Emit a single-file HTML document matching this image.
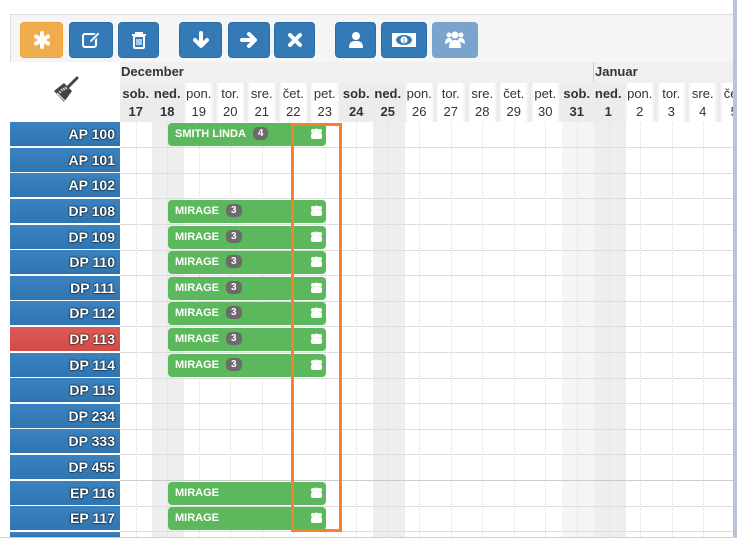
<!DOCTYPE html>
<html><head><meta charset="utf-8"><style>
*{margin:0;padding:0;box-sizing:border-box}
html,body{width:737px;height:541px;overflow:hidden}
body{background:#fff;font-family:"Liberation Sans",sans-serif;position:relative}
.a{position:absolute}
.tb{left:10px;top:14px;width:727px;height:48px;background:#f5f5f5;border-top:1px solid #ddd;border-left:1px solid #ddd}
.btn{position:absolute;top:22px;height:36px;border-radius:4px;background:#337ab7;border:1px solid #2e6da4;display:flex;align-items:center;justify-content:center}
.hd{left:10px;top:62px;width:724px;height:60px;background:#f0f0f0}
.day{position:absolute;top:83px;width:31.5px;height:39px;text-align:center;font-size:13px;color:#333;line-height:18px;padding-top:2px;background:linear-gradient(to right,#e8e8e8,#fff 4px,#fff 27px,#e8e8e8)}
.day.w{background:#ececec;font-weight:bold}
.day b{display:block}
.day span{display:block}
.lbl{position:absolute;left:10px;width:110px;height:24px;background:linear-gradient(#3a82c0,#3075b0);color:#fff;font-weight:bold;font-size:14px;text-align:right;padding-right:5px;line-height:24px;text-shadow:0 0 2px #000,0 0 1px #000;overflow:hidden}
.lbl.r{background:linear-gradient(#dc5b57,#d24c48)}
.hl{position:absolute;left:120px;width:614px;height:1px;background:#ddd}
.vl{position:absolute;top:122px;width:0;height:415px;border-left:1px dotted #ddd}
.gc{position:absolute;top:122px;width:31.5px;height:415px;background:#eee}
.bar{position:absolute;left:168px;width:158px;height:23px;background:#5cb85c;border-radius:4px;color:#fff;font-weight:bold;font-size:11px;line-height:23px;padding-left:7px}
.bg{display:inline-block;background:#6b6b6b;border-radius:5px;font-size:10px;line-height:13px;padding:0 5px;margin-left:7px;vertical-align:1px}
.ic{position:absolute;right:3px;top:5px}
</style></head><body>
<div class="a tb"></div>
<div class="btn" style="left:20px;width:43px;background:#f0ad4e;border-color:#eea236"><svg width="18" height="18" viewBox="0 0 18 18"><g stroke="#fff" stroke-width="4" stroke-linecap="round"><line x1="9" y1="2" x2="9" y2="16"/><line x1="3" y1="5.5" x2="15" y2="12.5"/><line x1="3" y1="12.5" x2="15" y2="5.5"/></g></svg></div>
<div class="btn" style="left:69px;width:44px"><svg width="20" height="18" viewBox="0 0 20 18"><rect x="2" y="3" width="13" height="13" rx="2" fill="none" stroke="#fff" stroke-width="2"/><path d="M8 12l1-3 8-8 2 2-8 8z" fill="#fff" stroke="#337ab7" stroke-width="1"/></svg></div>
<div class="btn" style="left:118px;width:41px"><svg width="16" height="18" viewBox="0 0 16 18"><path d="M1 4h14M5 4V2h6v2" stroke="#fff" stroke-width="2" fill="none"/><rect x="3" y="5" width="10" height="12" rx="1" fill="none" stroke="#fff" stroke-width="2"/><path d="M6 8v6M8 8v6M10 8v6" stroke="#fff" stroke-width="1.2"/></svg></div>
<div class="btn" style="left:179px;width:43px"><svg width="18" height="18" viewBox="0 0 18 18"><path d="M9 2v12M3 9l6 6 6-6" stroke="#fff" stroke-width="4" fill="none" stroke-linecap="round" stroke-linejoin="round"/></svg></div>
<div class="btn" style="left:228px;width:42px"><svg width="18" height="18" viewBox="0 0 18 18"><path d="M2 9h12M9 3l6 6-6 6" stroke="#fff" stroke-width="4" fill="none" stroke-linecap="round" stroke-linejoin="round"/></svg></div>
<div class="btn" style="left:274px;width:41px"><svg width="14" height="14" viewBox="0 0 14 14"><path d="M2 2l10 10M12 2L2 12" stroke="#fff" stroke-width="4" stroke-linecap="round"/></svg></div>
<div class="btn" style="left:335px;width:41px"><svg width="18" height="18" viewBox="0 0 18 18"><circle cx="9" cy="5" r="4" fill="#fff"/><path d="M2 17c0-6 3-7 7-7s7 1 7 7z" fill="#fff"/></svg></div>
<div class="btn" style="left:381px;width:46px"><svg width="24" height="14" viewBox="0 0 24 14"><rect x="0" y="0" width="24" height="14" fill="#fff"/><ellipse cx="12" cy="7" rx="8" ry="5" fill="#337ab7"/><circle cx="12" cy="7" r="3.5" fill="#fff"/><text x="12" y="9.5" font-size="6" text-anchor="middle" fill="#337ab7" font-family="Liberation Sans">1</text></svg></div>
<div class="btn" style="left:432px;width:46px;background:#7aa4cd;border-color:#7aa4cd"><svg width="22" height="18" viewBox="0 0 22 18"><circle cx="5" cy="4" r="2.5" fill="#fff"/><circle cx="17" cy="4" r="2.5" fill="#fff"/><circle cx="11" cy="4" r="3.5" fill="#fff"/><path d="M1 13c0-5 2-6 4-6s3 1 3 3zM21 13c0-5-2-6-4-6s-3 1-3 3z" fill="#fff"/><path d="M5 17c0-7 3-8 6-8s6 1 6 8z" fill="#fff"/></svg></div>

<div class="a hd"></div>
<div class="a" style="left:10px;top:62px;width:110px;height:60px;background:#fff"></div>
<svg class="a" style="left:48px;top:74px" width="36" height="32" viewBox="0 0 36 32"><path d="M20 13l9-9" stroke="#444" stroke-width="3" stroke-linecap="round"/><path d="M6 17l10-8 8 8-8 11z" fill="#444"/><path d="M9 19l8 8M11 17l2 2M13 15l2 2M15 14l2 2M17 13l2 2" stroke="#cfe0f0" stroke-width="1.3"/></svg>
<div class="a" style="left:121px;top:64px;font-size:13px;font-weight:bold;color:#333">December</div>
<div class="a" style="left:593px;top:62px;width:1px;height:20px;background:#ccc"></div>
<div class="a" style="left:595px;top:64px;font-size:13px;font-weight:bold;color:#333">Januar</div>

<div class="day w" style="left:120px"><b>sob.</b><b>17</b></div>
<div class="day w" style="left:151.5px"><b>ned.</b><b>18</b></div>
<div class="day" style="left:183px"><span>pon.</span><span>19</span></div>
<div class="day" style="left:214.5px"><span>tor.</span><span>20</span></div>
<div class="day" style="left:246px"><span>sre.</span><span>21</span></div>
<div class="day" style="left:277.5px"><span>čet.</span><span>22</span></div>
<div class="day" style="left:309px"><span>pet.</span><span>23</span></div>
<div class="day w" style="left:340.5px"><b>sob.</b><b>24</b></div>
<div class="day w" style="left:372px"><b>ned.</b><b>25</b></div>
<div class="day" style="left:403.5px"><span>pon.</span><span>26</span></div>
<div class="day" style="left:435px"><span>tor.</span><span>27</span></div>
<div class="day" style="left:466.5px"><span>sre.</span><span>28</span></div>
<div class="day" style="left:498px"><span>čet.</span><span>29</span></div>
<div class="day" style="left:529.5px"><span>pet.</span><span>30</span></div>
<div class="day w" style="left:561px"><b>sob.</b><b>31</b></div>
<div class="day w" style="left:592.5px"><b>ned.</b><b>1</b></div>
<div class="day" style="left:624px"><span>pon.</span><span>2</span></div>
<div class="day" style="left:655.5px"><span>tor.</span><span>3</span></div>
<div class="day" style="left:687px"><span>sre.</span><span>4</span></div>
<div class="day" style="left:718.5px"><span>čet.</span><span>5</span></div>

<div class="gc" style="left:152px"></div>
<div class="gc" style="left:373px"></div>
<div class="gc" style="left:562px;background:#f5f5f5"></div>
<div class="gc" style="left:594px"></div>

<div class="vl" style="left:136px"></div><div class="vl" style="left:167px"></div><div class="vl" style="left:199px"></div><div class="vl" style="left:230px"></div><div class="vl" style="left:262px"></div><div class="vl" style="left:293px"></div><div class="vl" style="left:325px"></div><div class="vl" style="left:356px"></div><div class="vl" style="left:388px"></div><div class="vl" style="left:419px"></div><div class="vl" style="left:451px"></div><div class="vl" style="left:482px"></div><div class="vl" style="left:514px"></div><div class="vl" style="left:545px"></div><div class="vl" style="left:577px"></div><div class="vl" style="left:609px"></div><div class="vl" style="left:640px"></div><div class="vl" style="left:672px"></div><div class="vl" style="left:703px"></div>

<div class="hl" style="top:147px"></div><div class="hl" style="top:173px"></div><div class="hl" style="top:198px"></div><div class="hl" style="top:224px"></div><div class="hl" style="top:250px"></div><div class="hl" style="top:275px"></div><div class="hl" style="top:301px"></div><div class="hl" style="top:326px"></div><div class="hl" style="top:352px"></div><div class="hl" style="top:378px"></div><div class="hl" style="top:403px"></div><div class="hl" style="top:429px"></div><div class="hl" style="top:454px"></div><div class="hl" style="top:480px;background:#ccc"></div><div class="hl" style="top:506px"></div><div class="hl" style="top:531px"></div>

<div class="lbl" style="top:122px">AP 100</div>
<div class="lbl" style="top:148px">AP 101</div>
<div class="lbl" style="top:173px">AP 102</div>
<div class="lbl" style="top:199px">DP 108</div>
<div class="lbl" style="top:225px">DP 109</div>
<div class="lbl" style="top:250px">DP 110</div>
<div class="lbl" style="top:276px">DP 111</div>
<div class="lbl" style="top:301px">DP 112</div>
<div class="lbl r" style="top:327px">DP 113</div>
<div class="lbl" style="top:353px">DP 114</div>
<div class="lbl" style="top:378px">DP 115</div>
<div class="lbl" style="top:404px">DP 234</div>
<div class="lbl" style="top:429px">DP 333</div>
<div class="lbl" style="top:455px">DP 455</div>
<div class="lbl" style="top:481px">EP 116</div>
<div class="lbl" style="top:506px">EP 117</div>
<div class="lbl" style="top:532px;height:5px">EP 118</div>

<div class="bar" style="top:123px">SMITH LINDA<span class="bg">4</span><svg class="ic" width="13" height="12" viewBox="0 0 13 12"><circle cx="3" cy="3" r="2" fill="#fff"/><circle cx="10" cy="3" r="2" fill="#fff"/><circle cx="6.5" cy="3" r="2.5" fill="#fff"/><rect x="1" y="5" width="11" height="6" rx="2" fill="#fff"/></svg></div>
<div class="bar" style="top:200px">MIRAGE<span class="bg">3</span><svg class="ic" width="13" height="12" viewBox="0 0 13 12"><circle cx="3" cy="3" r="2" fill="#fff"/><circle cx="10" cy="3" r="2" fill="#fff"/><circle cx="6.5" cy="3" r="2.5" fill="#fff"/><rect x="1" y="5" width="11" height="6" rx="2" fill="#fff"/></svg></div>
<div class="bar" style="top:226px">MIRAGE<span class="bg">3</span><svg class="ic" width="13" height="12" viewBox="0 0 13 12"><circle cx="3" cy="3" r="2" fill="#fff"/><circle cx="10" cy="3" r="2" fill="#fff"/><circle cx="6.5" cy="3" r="2.5" fill="#fff"/><rect x="1" y="5" width="11" height="6" rx="2" fill="#fff"/></svg></div>
<div class="bar" style="top:251px">MIRAGE<span class="bg">3</span><svg class="ic" width="13" height="12" viewBox="0 0 13 12"><circle cx="3" cy="3" r="2" fill="#fff"/><circle cx="10" cy="3" r="2" fill="#fff"/><circle cx="6.5" cy="3" r="2.5" fill="#fff"/><rect x="1" y="5" width="11" height="6" rx="2" fill="#fff"/></svg></div>
<div class="bar" style="top:277px">MIRAGE<span class="bg">3</span><svg class="ic" width="13" height="12" viewBox="0 0 13 12"><circle cx="3" cy="3" r="2" fill="#fff"/><circle cx="10" cy="3" r="2" fill="#fff"/><circle cx="6.5" cy="3" r="2.5" fill="#fff"/><rect x="1" y="5" width="11" height="6" rx="2" fill="#fff"/></svg></div>
<div class="bar" style="top:302px">MIRAGE<span class="bg">3</span><svg class="ic" width="13" height="12" viewBox="0 0 13 12"><circle cx="3" cy="3" r="2" fill="#fff"/><circle cx="10" cy="3" r="2" fill="#fff"/><circle cx="6.5" cy="3" r="2.5" fill="#fff"/><rect x="1" y="5" width="11" height="6" rx="2" fill="#fff"/></svg></div>
<div class="bar" style="top:328px">MIRAGE<span class="bg">3</span><svg class="ic" width="13" height="12" viewBox="0 0 13 12"><circle cx="3" cy="3" r="2" fill="#fff"/><circle cx="10" cy="3" r="2" fill="#fff"/><circle cx="6.5" cy="3" r="2.5" fill="#fff"/><rect x="1" y="5" width="11" height="6" rx="2" fill="#fff"/></svg></div>
<div class="bar" style="top:354px">MIRAGE<span class="bg">3</span><svg class="ic" width="13" height="12" viewBox="0 0 13 12"><circle cx="3" cy="3" r="2" fill="#fff"/><circle cx="10" cy="3" r="2" fill="#fff"/><circle cx="6.5" cy="3" r="2.5" fill="#fff"/><rect x="1" y="5" width="11" height="6" rx="2" fill="#fff"/></svg></div>
<div class="bar" style="top:482px">MIRAGE<svg class="ic" width="13" height="12" viewBox="0 0 13 12"><circle cx="3" cy="3" r="2" fill="#fff"/><circle cx="10" cy="3" r="2" fill="#fff"/><circle cx="6.5" cy="3" r="2.5" fill="#fff"/><rect x="1" y="5" width="11" height="6" rx="2" fill="#fff"/></svg></div>
<div class="bar" style="top:507px">MIRAGE<svg class="ic" width="13" height="12" viewBox="0 0 13 12"><circle cx="3" cy="3" r="2" fill="#fff"/><circle cx="10" cy="3" r="2" fill="#fff"/><circle cx="6.5" cy="3" r="2.5" fill="#fff"/><rect x="1" y="5" width="11" height="6" rx="2" fill="#fff"/></svg></div>

<div class="a" style="left:291px;top:123px;width:51px;height:409px;border:3px solid #f5822a"></div>
<div class="a" style="left:0;top:537px;width:737px;height:4px;background:#fff;border-top:1px solid #c8cfd8"></div>
<div class="a" style="left:733px;top:0;width:4px;height:537px;background:#b7c5da"></div>
</body></html>
